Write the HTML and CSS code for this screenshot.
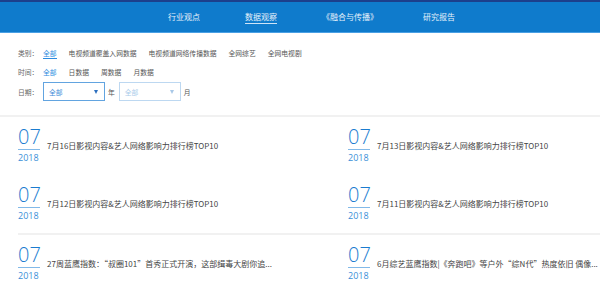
FILE: index.html
```html
<!DOCTYPE html>
<html lang="zh-CN">
<head>
    <meta charset="UTF-8">
    <meta name="viewport" content="width=device-width, initial-scale=1.0">
    <title>数据观察</title>
    <link rel="stylesheet" href="styles.css">
</head>
<body>
    <div class="topline"></div>
    <div class="nav">
        <a href="#">行业观点</a>
        <a href="#" class="active">数据观察</a>
        <a href="#">《融合与传播》</a>
        <a href="#">研究报告</a>
    </div>

    <div class="filters">
        <div class="filter-row">
            <span class="label">类别：</span>
            <span class="opt active underline">全部</span>
            <span class="opt">电视频道覆盖入网数据</span>
            <span class="opt">电视频道网络传播数据</span>
            <span class="opt">全网综艺</span>
            <span class="opt">全网电视剧</span>
        </div>
        <div class="filter-row">
            <span class="label">时间：</span>
            <span class="opt active">全部</span>
            <span class="opt">日数据</span>
            <span class="opt">周数据</span>
            <span class="opt">月数据</span>
        </div>
        <div class="filter-row date-row">
            <span class="label">日期：</span>
            <div class="select">全部<i class="arrow"></i></div>
            <span class="unit">年</span>
            <div class="select disabled">全部<i class="arrow"></i></div>
            <span class="unit">月</span>
        </div>
    </div>

    <div class="rule"></div>

    <div class="news">
        <div class="item">
            <div class="date"><div class="day">07</div><div class="bar"></div><div class="year">2018</div></div>
            <div class="title">7月16日影视内容&amp;艺人网络影响力排行榜TOP10</div>
        </div>
        <div class="item">
            <div class="date"><div class="day">07</div><div class="bar"></div><div class="year">2018</div></div>
            <div class="title">7月13日影视内容&amp;艺人网络影响力排行榜TOP10</div>
        </div>
        <div class="item sep">
            <div class="date"><div class="day">07</div><div class="bar"></div><div class="year">2018</div></div>
            <div class="title">7月12日影视内容&amp;艺人网络影响力排行榜TOP10</div>
        </div>
        <div class="item sep">
            <div class="date"><div class="day">07</div><div class="bar"></div><div class="year">2018</div></div>
            <div class="title">7月11日影视内容&amp;艺人网络影响力排行榜TOP10</div>
        </div>
        <div class="item">
            <div class="date"><div class="day">07</div><div class="bar"></div><div class="year">2018</div></div>
            <div class="title">27周蓝鹰指数：“叔圈101”首秀正式开演，这部缉毒大剧你追...</div>
        </div>
        <div class="item">
            <div class="date"><div class="day">07</div><div class="bar"></div><div class="year">2018</div></div>
            <div class="title">6月综艺蓝鹰指数|《奔跑吧》等户外“综N代”热度依旧 偶像...</div>
        </div>
    </div>
</body>
</html>
```

FILE: styles.css
```css
/* General styles */
body {
    margin: 0;
    padding: 0;
    font-family: "Noto Sans CJK SC", "Noto Sans", sans-serif;
    background-color: #fff;
    overflow: hidden;
}

.topline {
    height: 2px;
    background-color: #1c3f8c;
}

.nav {
    display: flex;
    align-items: center;
    gap: 45px;
    height: 30px;
    padding-left: 168px;
    background-color: #0f7bcc;
    border-bottom: 1px solid #4aa0e4;
}

.nav a {
    position: relative;
    font-size: 8px;
    line-height: 10px;
    color: #e6f1fb;
    text-decoration: none;
}

.nav a.active::after {
    content: "";
    position: absolute;
    left: 0;
    right: 0;
    bottom: -2px;
    height: 1px;
    background-color: #cfe4f7;
}

/* Filters */
.filters {
    padding: 10px 18px 0;
}

.filter-row {
    display: flex;
    align-items: center;
    height: 19px;
    font-size: 6.8px;
    line-height: 8px;
    color: #555;
}

.label {
    width: 25px;
    color: #666;
}

.opt {
    position: relative;
    margin-right: 12px;
}

.opt.active {
    color: #2b8be0;
}

.opt.underline::after {
    content: "";
    position: absolute;
    left: 0;
    right: 0;
    bottom: -2px;
    height: 1px;
    background-color: #2b8be0;
}

.date-row {
    margin-top: 1px;
}

.select {
    display: flex;
    align-items: center;
    justify-content: space-between;
    box-sizing: border-box;
    width: 62px;
    height: 19px;
    padding: 0 6px 0 5px;
    border: 1px solid #62a4e0;
    color: #3b8ad8;
}

.select .arrow {
    width: 0;
    height: 0;
    border-left: 2.5px solid transparent;
    border-right: 2.5px solid transparent;
    border-top: 4px solid #2c6fbf;
}

.select.disabled {
    border-color: #bdd8f1;
    color: #a9cbea;
}

.select.disabled .arrow {
    border-top-color: #a8c8e7;
}

.unit {
    margin: 0 4px 0 3px;
    color: #555;
}

.rule {
    height: 2px;
    margin-top: 14px;
    background-color: #f1f1f1;
}

/* News list */
.news {
    display: grid;
    grid-template-columns: 330px 1fr;
    padding-left: 18px;
}

.item {
    display: flex;
    align-items: center;
    gap: 7px;
    padding: 10px 0 11px;
}

.item.sep {
    border-bottom: 2px solid #f1f1f1;
}

.date {
    width: 22px;
    font-family: "Open Sans", sans-serif;
}

.day {
    font-size: 20px;
    line-height: 20px;
    font-weight: 300;
    color: #1b7ccf;
}

.bar {
    height: 1px;
    margin-top: 2px;
    background-color: #82b9e8;
}

.year {
    margin-top: 2px;
    font-size: 9px;
    line-height: 12px;
    color: #3a8fd7;
}

.title {
    font-size: 8px;
    line-height: 12px;
    color: #444;
    white-space: nowrap;
}
```
